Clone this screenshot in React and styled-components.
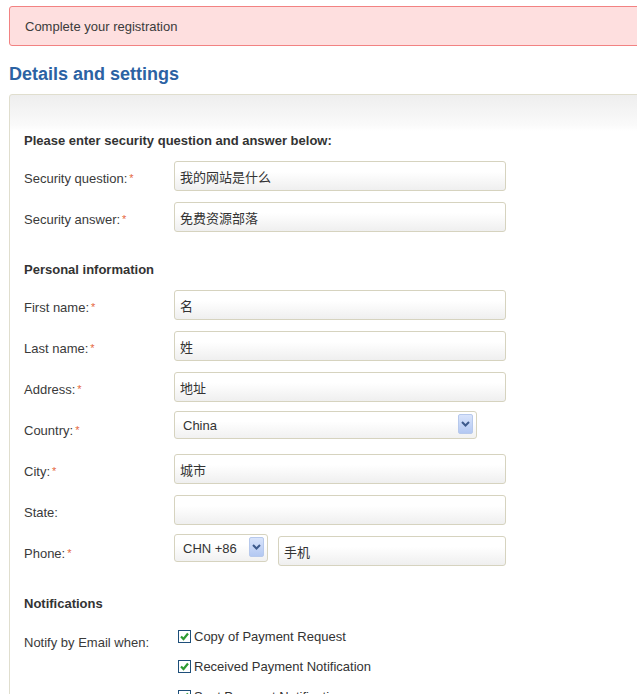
import React from 'react';
import styled, { createGlobalStyle } from 'styled-components';

const GlobalStyle = createGlobalStyle`
  html, body {
    margin: 0;
    padding: 0;
    background: #fff;
    overflow-x: hidden;
  }
  body {
    font-family: "Liberation Sans", Arial, "Noto Sans CJK SC", sans-serif;
    font-size: 13px;
    color: #3a3a3a;
  }
`;

const Page = styled.div`
  width: 680px;
  padding: 6px 0 40px 9px;
`;

const Alert = styled.div`
  height: 38px;
  display: flex;
  align-items: center;
  padding-left: 15px;
  background: #fedfdf;
  border: 1px solid #f28282;
  border-radius: 3px;
  color: #3b3b3b;
  font-size: 13px;
`;

const Heading = styled.h2`
  margin: 17px 0 9px;
  font-size: 18px;
  line-height: 22px;
  font-weight: bold;
  color: #2b62a3;
`;

const Panel = styled.div`
  border: 1px solid #e0dece;
  border-radius: 3px 0 0 0;
  background: linear-gradient(#eeeeee, #fafafa 30px, #ffffff 36px);
  padding: 36px 14px 20px;
`;

// margin-top collapses with the previous row's 11px bottom margin
const SectionTitle = styled.h3`
  margin: ${p => (p.first ? '1px' : '29px')} 0 11px;
  font-size: 13px;
  line-height: 18px;
  font-weight: bold;
  color: #333;
`;

const Row = styled.div`
  display: flex;
  align-items: flex-start;
  min-height: 30px;
  margin-bottom: 11px;
`;

const Label = styled.label`
  width: 150px;
  flex: none;
  padding-top: ${p => p.top || 10}px;
  line-height: 16px;
  color: #3a3a3a;
`;

const Req = styled.span`
  color: #e5683f;
  font-size: 11px;
  margin-left: 2px;
  vertical-align: top;
  position: relative;
  top: -1px;
`;

const Input = styled.input`
  box-sizing: border-box;
  width: ${p => p.w || 332}px;
  height: 30px;
  margin: 0 ${p => p.ml || 0}px;
  padding: 0 5px;
  border: 1px solid #d6d3bf;
  border-radius: 3px;
  background: linear-gradient(#ffffff 35%, #efefef);
  font-family: "Liberation Sans", Arial, "Noto Sans CJK SC", sans-serif;
  font-size: 13px;
  color: #333;
  outline: none;
`;

const SelectWrap = styled.div`
  position: relative;
  width: ${p => p.w}px;
  height: 28px;
  margin-top: -2px;
`;

const Select = styled.select`
  box-sizing: border-box;
  width: 100%;
  height: 100%;
  appearance: none;
  -webkit-appearance: none;
  padding: 0 8px;
  border: 1px solid #d6d3bf;
  border-radius: 3px;
  background: linear-gradient(#ffffff 35%, #f1f1f1);
  font-family: "Liberation Sans", Arial, sans-serif;
  font-size: 13px;
  color: #333;
  outline: none;
`;

const Arrow = styled.span`
  position: absolute;
  right: 4px;
  top: 3px;
  width: 15px;
  height: 20px;
  box-sizing: border-box;
  border: 1px solid #b7c9ec;
  border-radius: 2px;
  background: linear-gradient(#d9e4fb, #b3c8f2);
  display: flex;
  align-items: center;
  justify-content: center;
  pointer-events: none;
`;

const PhoneGroup = styled.div`
  display: flex;
  align-items: flex-start;
`;

const CheckList = styled.div`
  display: flex;
  flex-direction: column;
  gap: 6px;
  margin-left: 4px;
`;

const CheckItem = styled.label`
  display: flex;
  align-items: center;
  height: 24px;
  gap: 3px;
  color: #333;
`;

const Box = styled.span`
  width: 13px;
  height: 13px;
  box-sizing: border-box;
  border: 1px solid #1e4f7a;
  background: #fff;
  display: flex;
  align-items: center;
  justify-content: center;
  flex: none;
`;

const Chevron = () => (
  <svg width="9" height="6" viewBox="0 0 9 6">
    <path d="M1 1 L4.5 4.5 L8 1" fill="none" stroke="#3d5a8c" strokeWidth="2" />
  </svg>
);

const Check = () => (
  <svg width="11" height="11" viewBox="0 0 11 11">
    <path d="M2 5.5 L4.5 8 L9 2.5" fill="none" stroke="#2e9b32" strokeWidth="2.2" />
  </svg>
);

const Field = ({ label, value, required = true }) => (
  <Row>
    <Label>
      {label}
      {required && <Req>*</Req>}
    </Label>
    <Input defaultValue={value} />
  </Row>
);

const Dropdown = ({ width, value, options }) => (
  <SelectWrap w={width}>
    <Select defaultValue={value}>
      {options.map(o => <option key={o}>{o}</option>)}
    </Select>
    <Arrow><Chevron /></Arrow>
  </SelectWrap>
);

const notifications = [
  'Copy of Payment Request',
  'Received Payment Notification',
  'Sent Payment Notification',
];

export default function App() {
  return (
    <Page>
      <GlobalStyle />
      <Alert>Complete your registration</Alert>
      <Heading>Details and settings</Heading>
      <Panel>
        <SectionTitle first>Please enter security question and answer below:</SectionTitle>
        <Field label="Security question:" value="我的网站是什么" />
        <Field label="Security answer:" value="免费资源部落" />

        <SectionTitle>Personal information</SectionTitle>
        <Field label="First name:" value="名" />
        <Field label="Last name:" value="姓" />
        <Field label="Address:" value="地址" />
        <Row>
          <Label>Country:<Req>*</Req></Label>
          <Dropdown width={303} value="China" options={['China', 'United States', 'Japan']} />
        </Row>
        <Field label="City:" value="城市" />
        <Field label="State:" value="" required={false} />
        <Row>
          <Label>Phone:<Req>*</Req></Label>
          <PhoneGroup>
            <Dropdown width={94} value="CHN +86" options={['CHN +86', 'USA +1']} />
            <Input w={228} ml={10} defaultValue="手机" />
          </PhoneGroup>
        </Row>

        <SectionTitle>Notifications</SectionTitle>
        <Row>
          <Label top={11}>Notify by Email when:</Label>
          <CheckList>
            {notifications.map(n => (
              <CheckItem key={n}>
                <Box><Check /></Box>
                {n}
              </CheckItem>
            ))}
          </CheckList>
        </Row>
      </Panel>
    </Page>
  );
}
